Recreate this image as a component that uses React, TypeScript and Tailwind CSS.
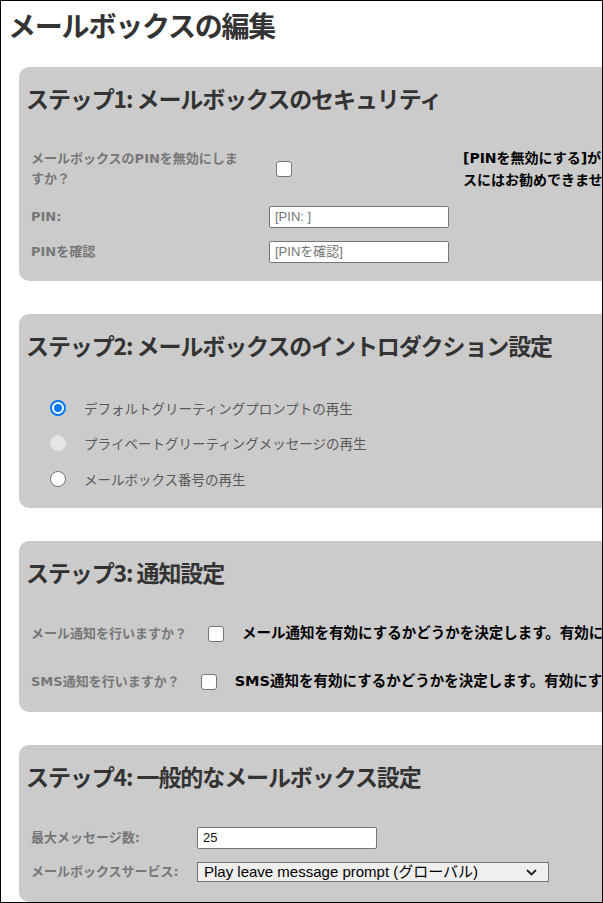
import React from "react";

const JP = "font-['DejaVu_Sans','Noto_Sans_CJK_JP',sans-serif]";
const ARIAL = "font-['Liberation_Sans','Noto_Sans_CJK_JP',sans-serif]";

function Card({ title, children, className = "" }: { title: string; children: React.ReactNode; className?: string }) {
  return (
    <section className={`ml-[18px] w-[720px] shrink-0 rounded-[10px] bg-[#cbcbcb] px-[7px] pt-[15px] ${className}`}>
      <h2 className="h-[32px] font-['Noto_Sans_CJK_JP',sans-serif] text-[23px] leading-[32px] font-bold tracking-[-1.1px] whitespace-nowrap text-[#333]">
        {title}
      </h2>
      <div className="ml-[5px]">{children}</div>
    </section>
  );
}

function Checkbox() {
  return <span className="block h-4 w-4 shrink-0 rounded-[3px] border border-[#767676] bg-white" />;
}

function Radio({ state }: { state: "on" | "off" | "disabled" }) {
  if (state === "on")
    return (
      <span className="flex h-4 w-4 shrink-0 items-center justify-center rounded-full border-2 border-[#0075ff] bg-white">
        <span className="h-2 w-2 rounded-full bg-[#0075ff]" />
      </span>
    );
  if (state === "disabled")
    return <span className="block h-4 w-4 shrink-0 rounded-full border border-[#e2e2e2] bg-[#e6e6e6]" />;
  return <span className="block h-4 w-4 shrink-0 rounded-full border border-[#767676] bg-white" />;
}

function TextBox({ value, placeholder, width = "w-[180px]" }: { value?: string; placeholder?: string; width?: string }) {
  return (
    <div className={`flex h-[22px] ${width} shrink-0 items-center rounded-[2px] border border-[#767676] bg-white px-[5px] ${ARIAL} text-[13px]`}>
      {value ? <span className="text-[#111]">{value}</span> : <span className="text-[#757575]">{placeholder}</span>}
    </div>
  );
}

const label = `${JP} text-[13px] font-bold text-[#777] whitespace-nowrap`;

export default function App() {
  return (
    <div className={`flex h-[903px] w-[603px] flex-col overflow-hidden border border-black bg-white ${JP}`}>
      <h1 className="pl-[7px] pt-[6px] font-['Noto_Sans_CJK_JP',sans-serif] text-[28px] leading-[36px] font-bold tracking-[-1.2px] text-[#333]">
        メールボックスの編集
      </h1>

      {/* Step 1 */}
      <Card title="ステップ1: メールボックスのセキュリティ" className="mt-[24px] pb-[18px]">
        <div className="mt-[33px] flex h-[44px] items-center">
          <div className={`w-[238px] shrink-0 ${label} leading-[20px]`}>
            メールボックスのPINを無効にしま
            <br />
            すか？
          </div>
          <div className="w-[194px] shrink-0 pl-[7px]">
            <Checkbox />
          </div>
          <div className={`${JP} text-[14px] leading-[22px] font-bold whitespace-nowrap text-black`}>
            [PINを無効にする]がオンの場合、共有メールボック
            <br />
            スにはお勧めできません。
          </div>
        </div>
        <div className="mt-[15px] flex items-center">
          <div className={`w-[238px] shrink-0 ${label}`}>PIN:</div>
          <TextBox placeholder="[PIN: ]" />
        </div>
        <div className="mt-[13px] flex items-center">
          <div className={`w-[238px] shrink-0 ${label}`}>PINを確認</div>
          <TextBox placeholder="[PINを確認]" />
        </div>
      </Card>

      {/* Step 2 */}
      <Card title="ステップ2: メールボックスのイントロダクション設定" className="mt-[33px] pb-[19px]">
        <div className="mt-[37px] flex flex-col">
          {[
            { t: "デフォルトグリーティングプロンプトの再生", s: "on" as const },
            { t: "プライベートグリーティングメッセージの再生", s: "disabled" as const },
            { t: "メールボックス番号の再生", s: "off" as const },
          ].map((r, i) => (
            <div key={r.t} className={`flex h-5 items-center gap-[18px] pl-[19px] ${i === 1 ? "mt-[15px]" : i === 2 ? "mt-[16px]" : ""}`}>
              <Radio state={r.s} />
              <span className="font-['Noto_Sans_CJK_JP',sans-serif] text-[13.5px] text-[#5a5a5a] whitespace-nowrap">{r.t}</span>
            </div>
          ))}
        </div>
      </Card>

      {/* Step 3 */}
      <Card title="ステップ3: 通知設定" className="mt-[33px] pb-[20px]">
        <div className="mt-[36px] flex h-5 items-center">
          <span className={`shrink-0 ${label}`}>メール通知を行いますか？</span>
          <span className="ml-[21px] shrink-0">
            <Checkbox />
          </span>
          <span className={`ml-[18px] ${JP} text-[14.5px] font-bold whitespace-nowrap text-black`}>
            メール通知を有効にするかどうかを決定します。有効にすると、新しいメッセージが届いたときに通知されます。
          </span>
        </div>
        <div className="mt-[28px] flex h-5 items-center">
          <span className={`shrink-0 ${label}`}>SMS通知を行いますか？</span>
          <span className="ml-[21px] shrink-0">
            <Checkbox />
          </span>
          <span className={`ml-[18px] ${JP} text-[14.5px] font-bold whitespace-nowrap text-black`}>
            SMS通知を有効にするかどうかを決定します。有効にすると、新しいメッセージが届いたときに通知されます。
          </span>
        </div>
      </Card>

      {/* Step 4 */}
      <Card title="ステップ4: 一般的なメールボックス設定" className="mt-[33px] pb-[20px]">
        <div className="mt-[35px] flex items-center">
          <div className={`w-[166px] shrink-0 ${label}`}>最大メッセージ数:</div>
          <TextBox value="25" />
        </div>
        <div className="mt-[13px] flex items-center">
          <div className={`w-[166px] shrink-0 ${label}`}>メールボックスサービス:</div>
          <div className={`flex h-[20px] w-[352px] shrink-0 items-center justify-between border border-[#767676] bg-[#efefef] pl-[6px] pr-[11px] ${ARIAL} text-[15px] text-black`}>
            <span className="whitespace-nowrap">Play leave message prompt (グローバル)</span>
            <svg width="11" height="7" viewBox="0 0 11 7" fill="none">
              <path d="M1 1l4.5 4.5L10 1" stroke="#222" strokeWidth="1.8" />
            </svg>
          </div>
        </div>
      </Card>
    </div>
  );
}
